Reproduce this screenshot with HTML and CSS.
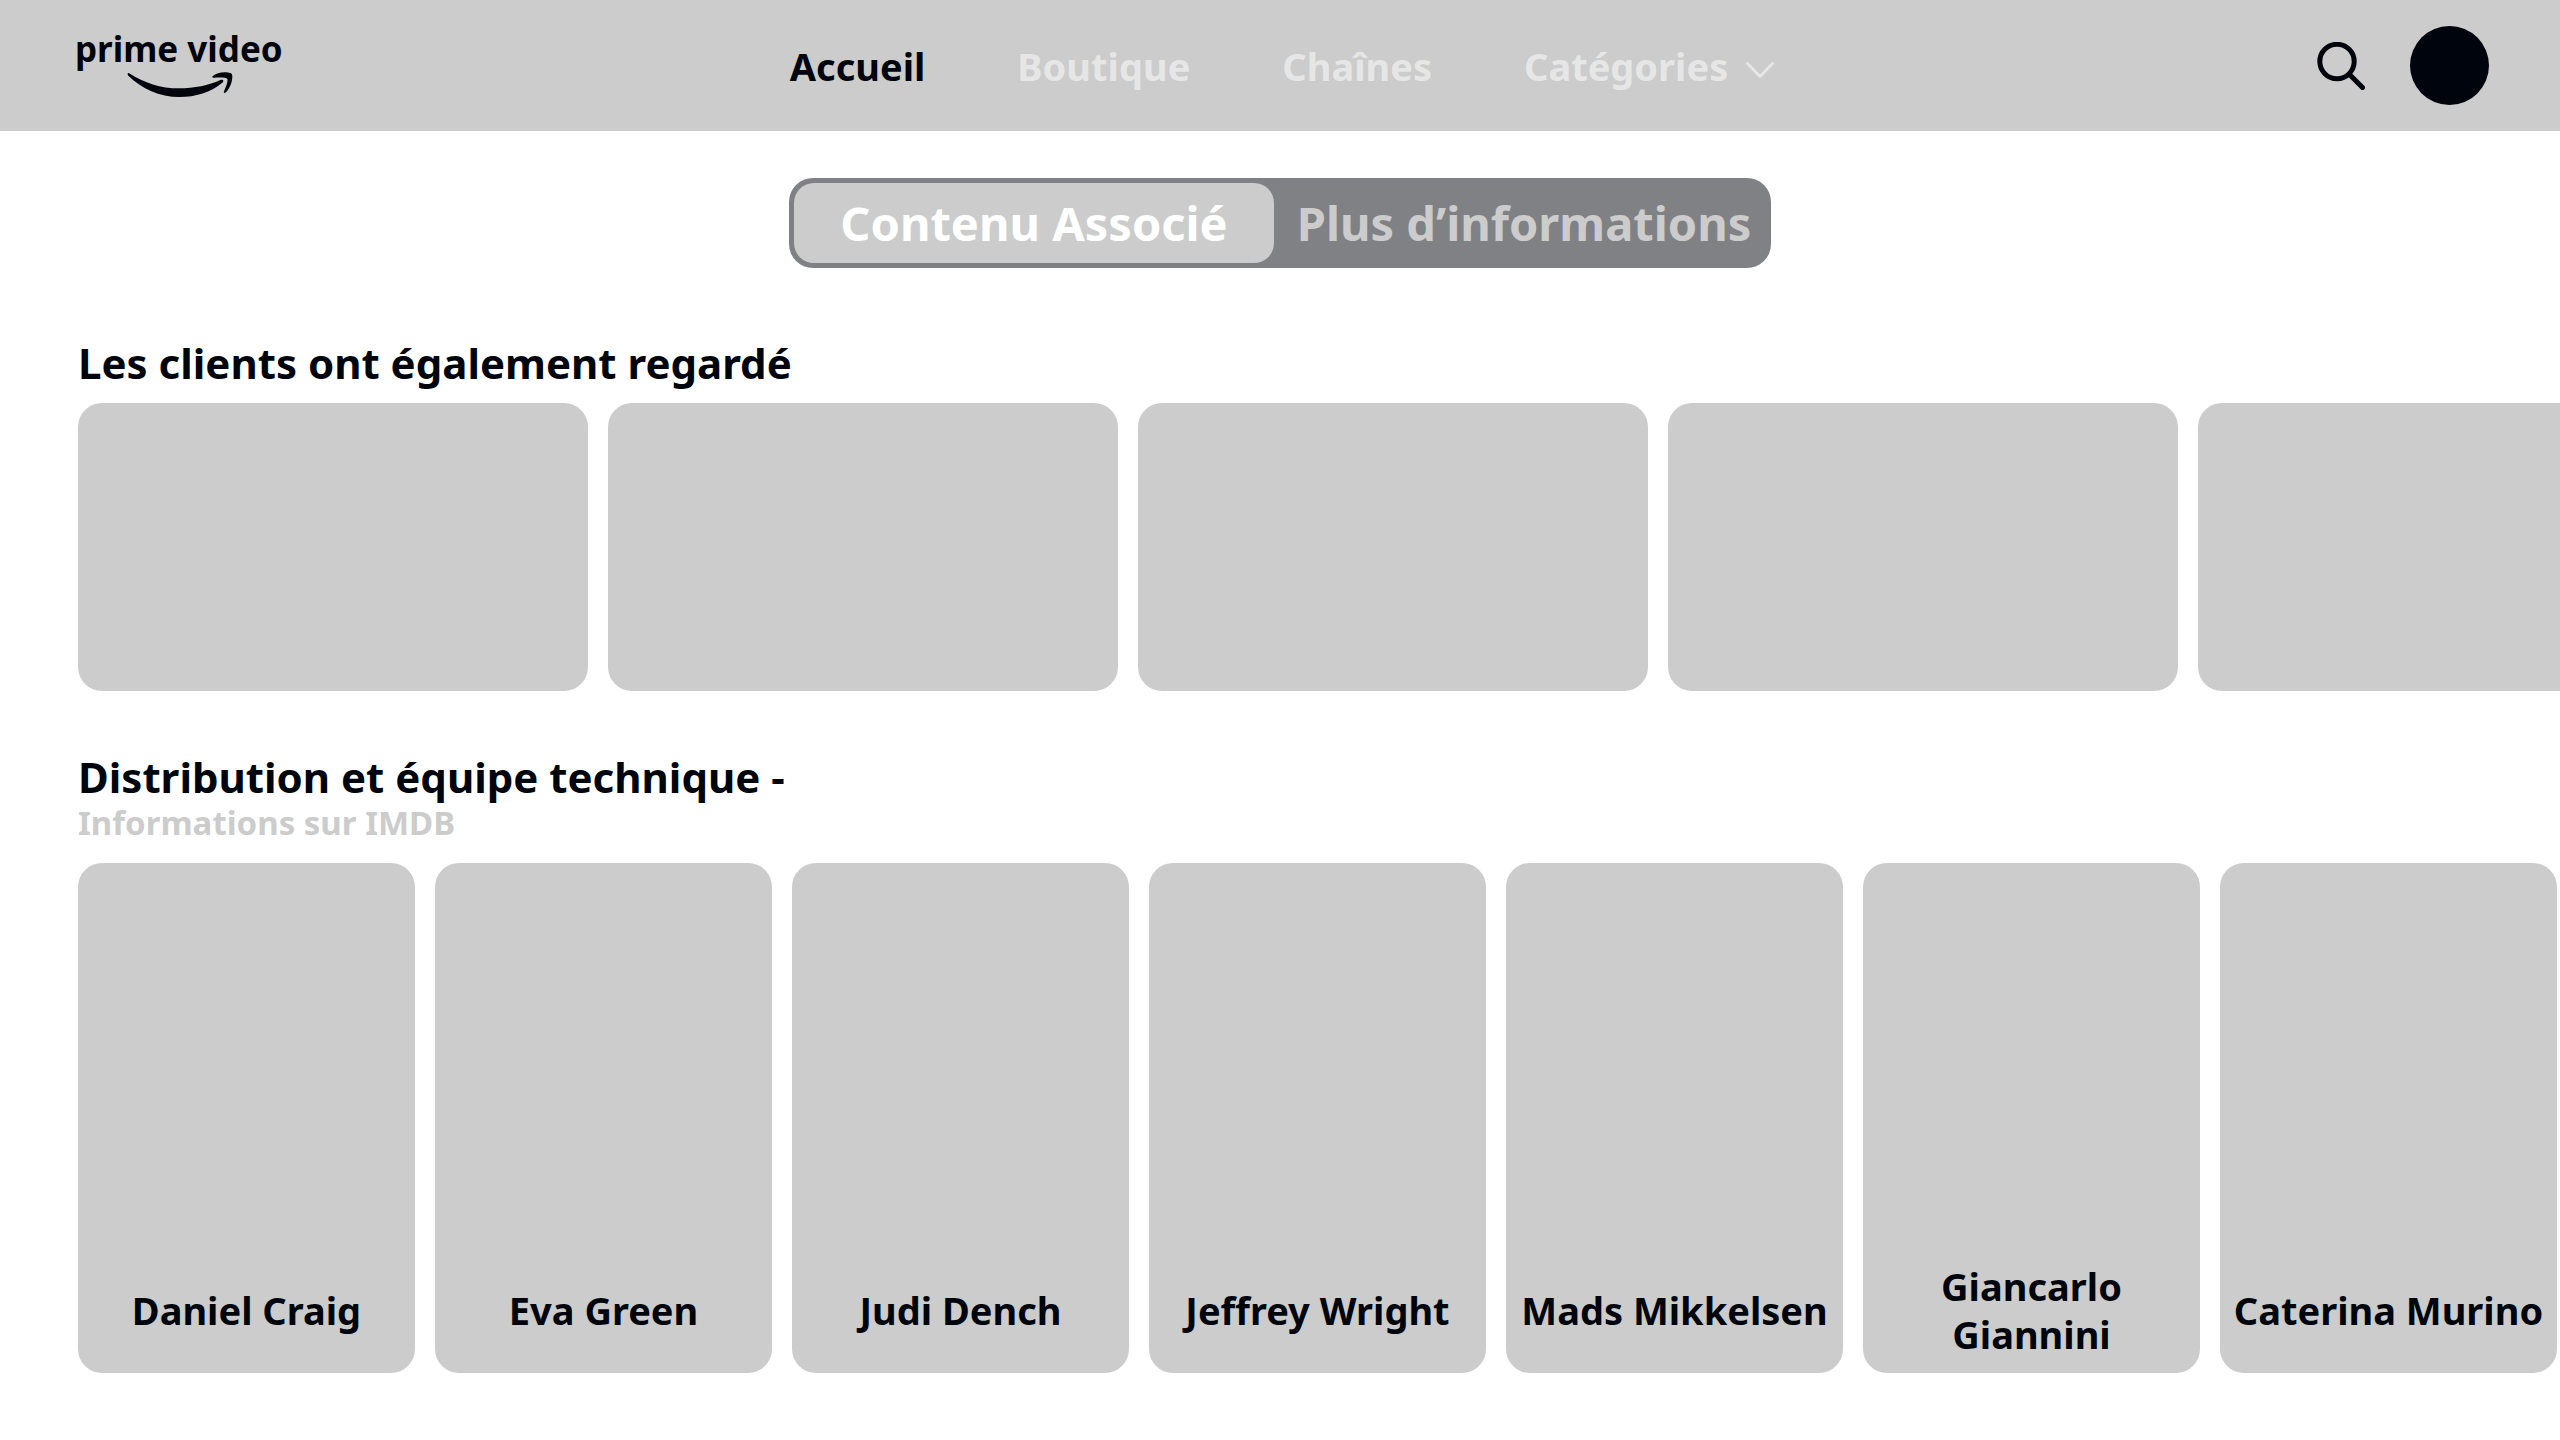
FILE: index.html
```html
<!DOCTYPE html>
<html lang="fr">

<head>
  <meta charset="UTF-8">
  <meta name="viewport" content="width=device-width, initial-scale=1.0">
  <title>Prime Video</title>
  <link rel="stylesheet" href="styles.css">
</head>

<body>
  <header class="header">
    <a class="logo" href="#">
      <span class="logo-text">prime video</span>
      <svg class="logo-smile" viewBox="260 213 318 81" fill="currentColor" aria-hidden="true">
        <path d="M262 221 Q263 217 269 221 C310 248 362 265 416 265 C462 265 505 256 540 240 C547 237 553 242 546 248 C513 276 464 291 418 291 C356 291 305 266 264 227 Q261 224 262 221 Z" />
        <path d="M517 229 C528 218 548 215 566 218 C573 219 576 221 576 228 C576 246 569 264 557 277 C553 281 549 279 551 274 C556 262 564 243 561 237 C558 231 536 232 522 233 C515 234 515 231 517 229 Z" />
      </svg>
    </a>

    <nav class="nav">
      <a class="nav-link active" href="#">Accueil</a>
      <a class="nav-link" href="#">Boutique</a>
      <a class="nav-link" href="#">Chaînes</a>
      <button class="nav-link" type="button">
        Catégories
        <svg class="chevron" viewBox="0 0 28 18" aria-hidden="true">
          <path d="M1.500 2.500 L14 15.500 L26.500 2.500" />
        </svg>
      </button>
    </nav>

    <div class="actions">
      <button class="search" type="button" aria-label="Rechercher">
        <svg viewBox="0 0 48 48" aria-hidden="true">
          <circle cx="20" cy="19.500" r="17.200" />
          <path d="M33 33 L45.500 45.500" />
        </svg>
      </button>
      <button class="avatar" type="button" aria-label="Profil"></button>
    </div>
  </header>

  <main>
    <div class="tabs">
      <button class="tab selected" type="button">Contenu Associé</button>
      <button class="tab" type="button">Plus d’informations</button>
    </div>

    <section class="section">
      <h2>Les clients ont également regardé</h2>
      <ul class="row">
        <li class="movie"></li>
        <li class="movie"></li>
        <li class="movie"></li>
        <li class="movie"></li>
        <li class="movie"></li>
      </ul>
    </section>

    <section class="section">
      <h2>Distribution et équipe technique -</h2>
      <p class="subtitle">Informations sur IMDB</p>
      <ul class="row cast">
        <li class="person"><span>Daniel Craig</span></li>
        <li class="person"><span>Eva Green</span></li>
        <li class="person"><span>Judi Dench</span></li>
        <li class="person"><span>Jeffrey Wright</span></li>
        <li class="person"><span>Mads Mikkelsen</span></li>
        <li class="person"><span>Giancarlo Giannini</span></li>
        <li class="person"><span>Caterina Murino</span></li>
      </ul>
    </section>
  </main>
</body>

</html>
```
FILE: styles.css
```css
:root {
  --dark: #00050d;
  --grey: #cccccc;
  --grey-light: #e6e6e6;
  --grey-dark: #808185;
  --radius: 24px;
}

* {
  box-sizing: border-box;
  margin: 0;
  padding: 0;
}

body {
  font-family: "Noto Sans", sans-serif;
  font-weight: 700;
  color: var(--dark);
  background-color: white;
  overflow-x: hidden;
}

a {
  color: inherit;
  text-decoration: none;
}

button {
  font: inherit;
  color: inherit;
  background: none;
  border: none;
  cursor: pointer;
}

ul {
  list-style: none;
}

/* Header */

.header {
  display: grid;
  grid-template-columns: 1fr auto 1fr;
  align-items: center;
  height: 131px;
  padding: 0 71px 0 75px;
  background-color: var(--grey);
}

.logo {
  display: flex;
  flex-direction: column;
  justify-self: start;
  padding-bottom: 6px;
}

.logo-text {
  font-size: 35px;
  line-height: 44px;
}

.logo-smile {
  width: 106px;
  height: 27px;
  margin-left: 52px;
}

.nav {
  display: flex;
  gap: 92px;
  font-size: 38px;
  line-height: 48px;
}

.nav-link {
  display: flex;
  align-items: center;
  gap: 18px;
  color: var(--grey-light);
}

.nav-link.active {
  color: var(--dark);
}

.chevron {
  width: 28px;
  height: 18px;
  margin-top: 8px;
  fill: none;
  stroke: currentColor;
  stroke-width: 3;
  stroke-linecap: round;
  stroke-linejoin: round;
}

.actions {
  display: flex;
  align-items: center;
  justify-self: end;
  gap: 45px;
}

.search {
  width: 48px;
  height: 48px;
}

.search svg {
  display: block;
  fill: none;
  stroke: currentColor;
  stroke-width: 5;
  stroke-linecap: round;
}

.avatar {
  width: 79px;
  height: 79px;
  border-radius: 50%;
  background-color: var(--dark);
}

/* Tabs */

.tabs {
  display: flex;
  max-width: 982px;
  height: 90px;
  margin: 47px auto 69px;
  padding: 5px;
  border-radius: var(--radius);
  background-color: var(--grey-dark);
}

.tab {
  flex: 1 1 auto;
  padding-left: 8px;
  border-radius: 20px;
  font-size: 47px;
  line-height: 60px;
  color: var(--grey);
}

.tab.selected {
  flex: 0 0 480px;
  padding-left: 0;
  color: white;
  background-color: var(--grey);
}

/* Sections */

.section {
  padding-left: 78px;
  margin-bottom: 60px;
}

h2 {
  font-size: 42px;
  font-weight: inherit;
  line-height: 52px;
}

.subtitle {
  font-size: 33px;
  line-height: 40px;
  color: var(--grey);
}

.row {
  display: flex;
  gap: 20px;
  margin-top: 14px;
  overflow: hidden;
}

.row.cast {
  margin-top: 20px;
}

.movie {
  flex: 0 0 510px;
  height: 288px;
  border-radius: var(--radius);
  background-color: var(--grey);
}

.person {
  display: flex;
  flex: 0 0 337px;
  align-items: flex-end;
  justify-content: center;
  height: 510px;
  padding: 0 12px 15px;
  border-radius: var(--radius);
  background-color: var(--grey);
}

.person span {
  display: flex;
  align-items: center;
  min-height: 96px;
  font-size: 38px;
  line-height: 48px;
  text-align: center;
}
```
